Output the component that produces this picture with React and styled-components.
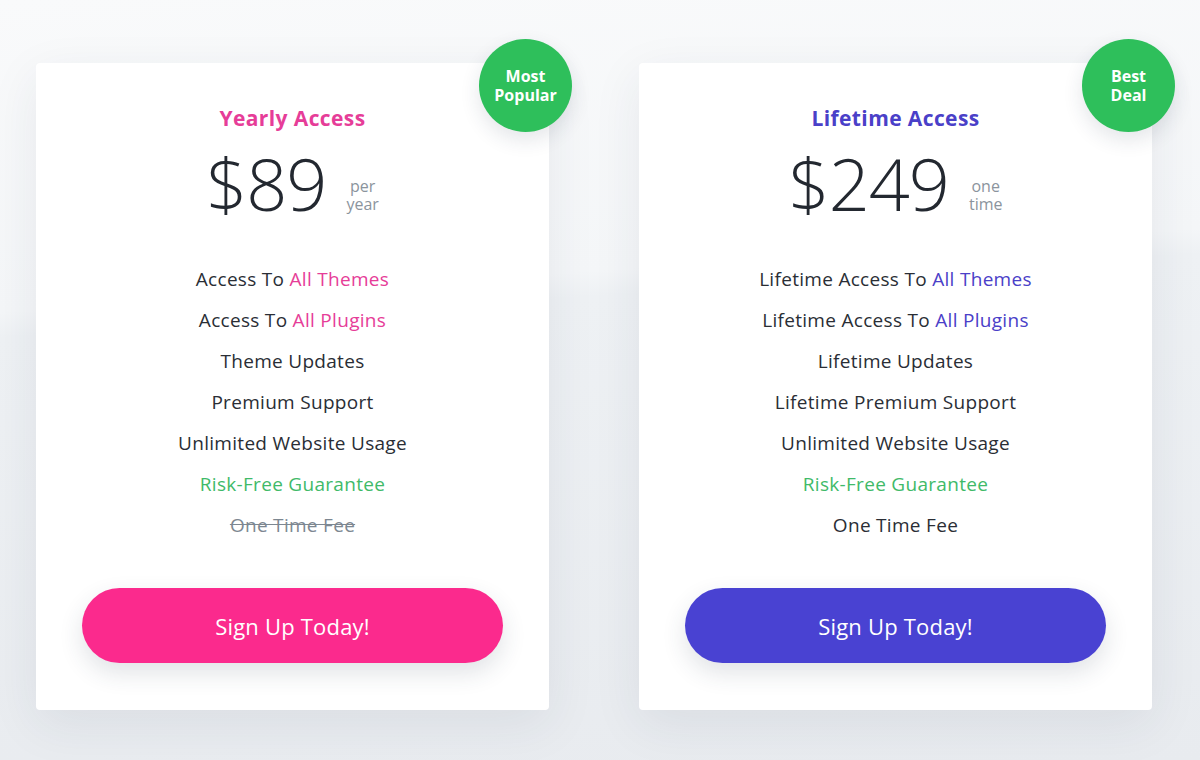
import React from 'react';
import styled, { createGlobalStyle } from 'styled-components';

const GlobalStyle = createGlobalStyle`
  html, body {
    margin: 0;
    padding: 0;
  }
  body {
    width: 1200px;
    height: 760px;
    overflow: hidden;
    font-family: "Open Sans", "Noto Sans", sans-serif;
    background: linear-gradient(176deg, #f9fafb 0%, #f4f6f8 37%, #eef1f4 40%, #e8ebef 100%);
  }
`;

const Page = styled.div`
  display: flex;
  gap: 90px;
  padding: 63px 0 0 36px;
`;

const Card = styled.div`
  position: relative;
  width: 513px;
  height: 647px;
  box-sizing: border-box;
  padding: 42px 46px 47px;
  display: flex;
  flex-direction: column;
  align-items: center;
  background: #fff;
  border-radius: 4px;
  box-shadow: 0 14px 50px rgba(40, 55, 80, 0.08);
`;

const Badge = styled.div`
  position: absolute;
  top: -24px;
  right: -23px;
  width: 93px;
  height: 93px;
  border-radius: 50%;
  background: #2ebf5b;
  color: #fff;
  display: flex;
  flex-direction: column;
  align-items: center;
  justify-content: center;
  text-align: center;
  font-size: 16px;
  font-weight: 700;
  line-height: 19px;
  box-shadow: 0 8px 20px rgba(30, 50, 70, 0.12);
`;

const Title = styled.h2`
  margin: 0;
  font-size: 21px;
  line-height: 26px;
  font-weight: 700;
  letter-spacing: 0.4px;
  color: ${(p) => p.$accent};
`;

const PriceRow = styled.div`
  display: flex;
  align-items: center;
  gap: 20px;
  margin-top: 16px;
`;

const Amount = styled.div`
  font-size: 72px;
  line-height: 72px;
  font-weight: 300;
  color: #232830;
  letter-spacing: -1px;
`;

const Period = styled.div`
  display: flex;
  flex-direction: column;
  align-items: center;
  font-size: 16px;
  line-height: 18px;
  color: #8b949d;
  margin-top: 24px;
`;

const Features = styled.ul`
  list-style: none;
  margin: 40px 0 0;
  padding: 0;
  text-align: center;
`;

const Feature = styled.li`
  font-size: 19px;
  line-height: 41px;
  letter-spacing: 0.3px;
  color: ${(p) => (p.$green ? '#3fba69' : p.$muted ? '#7d8791' : '#2a2e35')};
  text-decoration: ${(p) => (p.$muted ? 'line-through' : 'none')};
`;

const Hi = styled.span`
  color: ${(p) => p.$accent};
`;

const Button = styled.button`
  margin-top: auto;
  width: 100%;
  height: 75px;
  border: 0;
  border-radius: 38px;
  background: ${(p) => p.$bg};
  color: #fff;
  font-family: inherit;
  font-size: 22px;
  font-weight: 500;
  letter-spacing: 0.2px;
  cursor: pointer;
  box-shadow: 0 10px 24px rgba(40, 55, 80, 0.14);
`;

const plans = [
  {
    title: 'Yearly Access',
    accent: '#e63d98',
    button: '#fb2a8d',
    badge: ['Most', 'Popular'],
    price: '$89',
    period: ['per', 'year'],
    prefix: '',
    updates: 'Theme Updates',
    support: 'Premium Support',
    feeMuted: true,
  },
  {
    title: 'Lifetime Access',
    accent: '#4a40c8',
    button: '#4942d2',
    badge: ['Best', 'Deal'],
    price: '$249',
    period: ['one', 'time'],
    prefix: 'Lifetime ',
    updates: 'Lifetime Updates',
    support: 'Lifetime Premium Support',
    feeMuted: false,
  },
];

function PlanCard({ plan }) {
  return (
    <Card>
      <Badge>
        <span>{plan.badge[0]}</span>
        <span>{plan.badge[1]}</span>
      </Badge>
      <Title $accent={plan.accent}>{plan.title}</Title>
      <PriceRow>
        <Amount>{plan.price}</Amount>
        <Period>
          <span>{plan.period[0]}</span>
          <span>{plan.period[1]}</span>
        </Period>
      </PriceRow>
      <Features>
        <Feature>
          {plan.prefix}Access To <Hi $accent={plan.accent}>All Themes</Hi>
        </Feature>
        <Feature>
          {plan.prefix}Access To <Hi $accent={plan.accent}>All Plugins</Hi>
        </Feature>
        <Feature>{plan.updates}</Feature>
        <Feature>{plan.support}</Feature>
        <Feature>Unlimited Website Usage</Feature>
        <Feature $green>Risk-Free Guarantee</Feature>
        <Feature $muted={plan.feeMuted}>One Time Fee</Feature>
      </Features>
      <Button $bg={plan.button}>Sign Up Today!</Button>
    </Card>
  );
}

export default function App() {
  return (
    <>
      <GlobalStyle />
      <Page>
        {plans.map((p) => (
          <PlanCard key={p.title} plan={p} />
        ))}
      </Page>
    </>
  );
}
